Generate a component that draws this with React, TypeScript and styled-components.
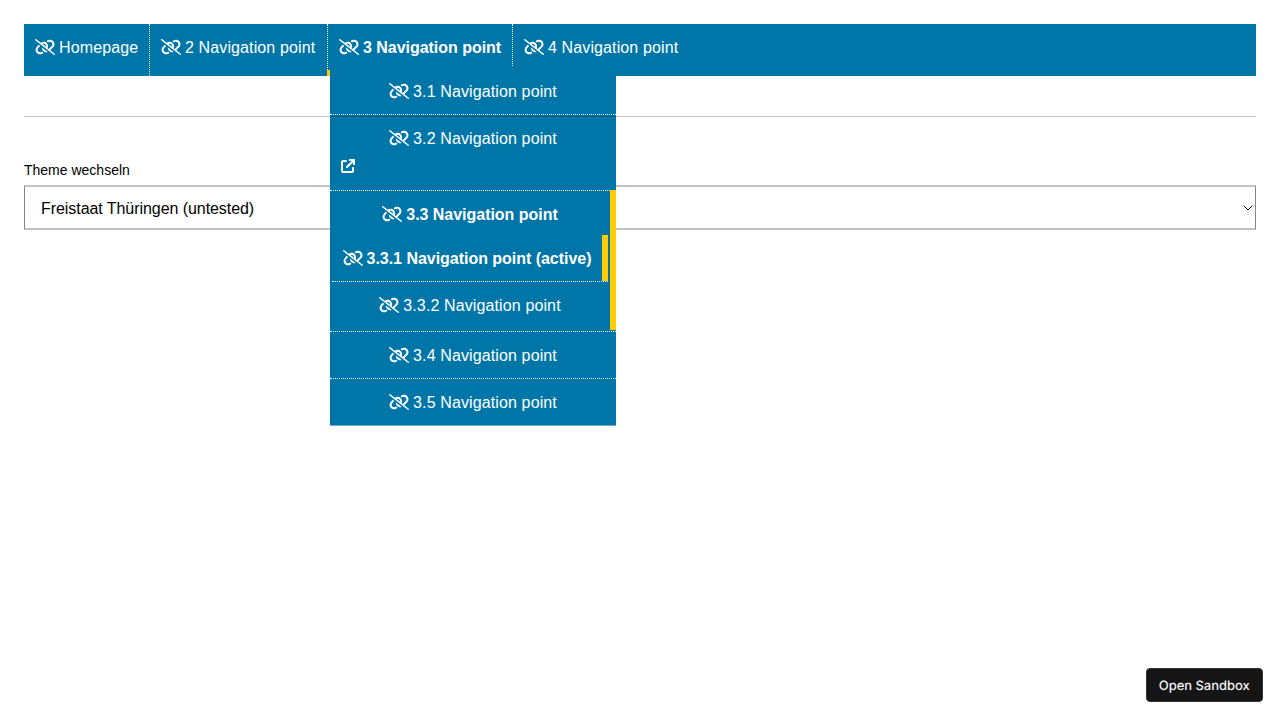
import React from 'react';
import styled, { createGlobalStyle } from 'styled-components';
import { FaLinkSlash } from 'react-icons/fa6';

const blue = '#0076a8';
const yellow = '#ffcc00';

const GlobalStyle = createGlobalStyle`
  * { box-sizing: border-box; }
  body {
    margin: 0;
    min-height: 100vh;
    background: #fff;
    color: #000;
    font-family: "Liberation Sans", Arial, sans-serif;
    font-size: 16px;
  }
`;

const Page = styled.main`
  min-height: 100vh;
  padding: 24px;
`;

const Nav = styled.nav`
  display: flex;
  height: 52px;
  background: ${blue};
  color: #fff;
`;

const NavItem = styled.div<{ $width: number; $last?: boolean }>`
  position: relative;
  width: ${p => p.$width}px;
  height: 52px;
  padding: 13px 0 0 11px;
  border-right: ${p => (p.$last ? 'none' : '1px dotted #fff')};
`;

const ActiveMark = styled.div`
  position: absolute;
  left: -1px;
  right: 0;
  bottom: 0;
  height: 6px;
  background: ${yellow};
`;

const Label = styled.span<{ $bold?: boolean }>`
  display: flex;
  align-items: center;
  gap: 4px;
  height: 21px;
  line-height: 21px;
  white-space: nowrap;
  font-weight: ${p => (p.$bold ? 700 : 400)};
  letter-spacing: ${p => (p.$bold ? -0.03 : 0.12)}px;
  svg { width: 20px; height: 16px; flex: none; margin-bottom: 1px; }
`;

const Dropdown = styled.div`
  position: absolute;
  z-index: 1;
  top: 43px;
  left: 2px;
  width: 286px;
  background: ${blue};
  border-bottom: 1px solid #66add0;
`;

const Row = styled.div<{ $height: number; $last?: boolean; $top?: number }>`
  position: relative;
  display: flex;
  flex-direction: column;
  align-items: center;
  height: ${p => p.$height}px;
  padding-top: ${p => p.$top ?? 13}px;
  border-bottom: ${p => (p.$last ? 'none' : '1px dotted #fff')};
`;

const Bar = styled.div`
  position: absolute;
  top: -1px;
  right: 0;
  bottom: 1px;
  width: 6px;
  background: ${yellow};
`;

const Group = styled(Row)`
  padding-right: 6px;
`;

const SubMenu = styled.div`
  width: 276px;
  margin: 10px 0 0;
`;

const SubBar = styled(Bar)`
  top: 0;
  bottom: 0;
`;

const SubRow = styled(Row)<{ $active?: boolean }>`
  padding-right: ${p => (p.$active ? 6 : 0)}px;
`;

const External = styled.span`
  align-self: flex-start;
  margin: 9px 0 0 11px;
  line-height: 0;
  svg { width: 14px; height: 16px; fill: #fff; }
`;

const Rule = styled.hr`
  position: relative;
  z-index: 2;
  height: 1px;
  margin: 40px 0 44px;
  border: 0;
  background: rgba(0, 0, 0, 0.23);
`;

const FieldLabel = styled.label`
  display: block;
  height: 24px;
  font-size: 14px;
  line-height: 18px;
`;

const Select = styled.div`
  display: flex;
  align-items: center;
  justify-content: space-between;
  height: 45px;
  padding: 2px 3px 0 16px;
  border: solid;
  border-width: 2px 1px;
  border-color: #c2c2c2 #858585;
`;

const SelectValue = styled.span`
  line-height: 20px;
  letter-spacing: -0.06px;
`;

const Chevron = styled.svg`
  display: block;
  margin: 0 -1px 2px 0;
`;

const SandboxButton = styled.button`
  position: fixed;
  right: 17.5px;
  bottom: 18px;
  width: 116.5px;
  height: 34px;
  padding: 2px 0 0;
  border: 1px solid #343434;
  border-radius: 4px;
  background: #151515;
  color: #f4f4f4;
  font: 500 13px/16px Inter, sans-serif;
  letter-spacing: -0.03px;
  text-rendering: geometricPrecision;
`;

function NavLabel({ text, bold }: { text: string; bold?: boolean }) {
  return <Label $bold={bold}><FaLinkSlash /><span>{text}</span></Label>;
}

function ExternalIcon() {
  return (
    <svg viewBox="0 0 448 512">
      <path d="M256 64C256 46.33 270.3 32 288 32H416C424.5 32 433 35.5 438.6 41.3C444.9 47.66 448 55.78 448 64V192C448 209.7 433.7 224 416 224C398.3 224 384 209.7 384 192V141.3L214.6 310.6C202.1 323.1 181.9 323.1 169.4 310.6C156.9 298.1 156.9 277.9 169.4 265.4L338.7 96H288C270.3 96 256 81.67 256 64zM0 128C0 92.65 28.65 64 64 64H160C177.7 64 192 78.33 192 96C192 113.7 177.7 128 160 128H64V416H352V320C352 302.3 366.3 288 384 288C401.7 288 416 302.3 416 320V416C416 451.3 387.3 480 352 480H64C28.65 480 0 451.3 0 416V128z" />
    </svg>
  );
}

export default function App() {
  return (
    <>
      <GlobalStyle />
      <Page>
        <Nav>
          <NavItem $width={126}><NavLabel text="Homepage" /></NavItem>
          <NavItem $width={178}><NavLabel text="2 Navigation point" /></NavItem>
          <NavItem $width={185}>
            <NavLabel bold text="3 Navigation point" />
            <ActiveMark />
            <Dropdown>
              <Row $height={48} $top={14}><NavLabel text="3.1 Navigation point" /></Row>
              <Row $height={76}>
                <NavLabel text="3.2 Navigation point" />
                <External><ExternalIcon /></External>
              </Row>
              <Group $height={141}>
                <NavLabel bold text="3.3 Navigation point" />
                <SubMenu>
                  <SubRow $height={47} $active>
                    <NavLabel bold text="3.3.1 Navigation point (active)" />
                    <SubBar />
                  </SubRow>
                  <SubRow $height={48} $last><NavLabel text="3.3.2 Navigation point" /></SubRow>
                </SubMenu>
                <Bar />
              </Group>
              <Row $height={47}><NavLabel text="3.4 Navigation point" /></Row>
              <Row $height={46} $last><NavLabel text="3.5 Navigation point" /></Row>
            </Dropdown>
          </NavItem>
          <NavItem $width={190} $last><NavLabel text="4 Navigation point" /></NavItem>
        </Nav>
        <Rule />
        <FieldLabel>Theme wechseln</FieldLabel>
        <Select>
          <SelectValue>Freistaat Thüringen (untested)</SelectValue>
          <Chevron width="10" height="6" viewBox="0 0 10 6" fill="none" stroke="#000">
            <path d="M.7.7 5 5 9.3.7" />
          </Chevron>
        </Select>
      </Page>
      <SandboxButton>Open Sandbox</SandboxButton>
    </>
  );
}
